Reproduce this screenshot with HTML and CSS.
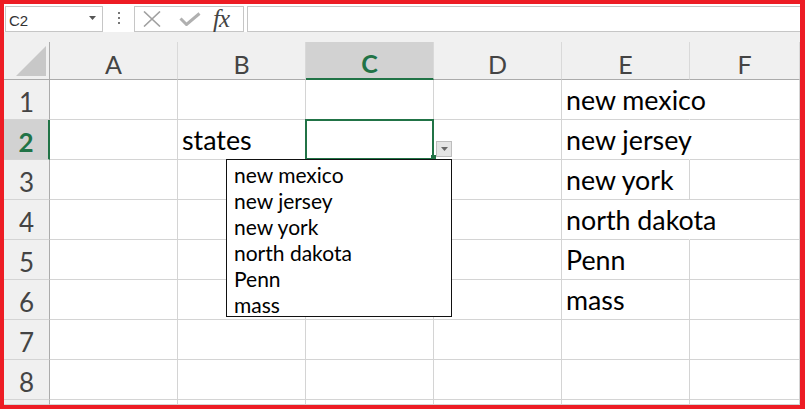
FILE: index.html
```html
<!DOCTYPE html>
<html lang="en">
<head>
  <meta charset="UTF-8">
  <meta name="viewport" content="width=device-width, initial-scale=1.0">
  <title>States list</title>
  <link rel="stylesheet" href="styles.css">
</head>
<body>
  <div class="window">
    <div class="formula-bar">
      <div class="name-box">
        <span>C2</span>
        <svg class="name-arrow" width="7" height="4" viewBox="0 0 7 4"><path d="M0 0h7L3.5 4z"/></svg>
      </div>
      <div class="grip"><span></span><span></span><span></span></div>
      <div class="fx-buttons">
        <svg class="icon-cancel" width="18" height="16" viewBox="0 0 18 16"><path d="M1 0.5L17 15.5M17 0.5L1 15.5"/></svg>
        <svg class="icon-enter" width="22" height="14" viewBox="0 0 22 14"><path d="M1.5 6.5L7.5 12.5L20.5 1.5"/></svg>
        <span class="fx">fx</span>
      </div>
      <div class="formula-input"></div>
    </div>

    <div class="sheet">
      <div class="grid">
        <div class="corner"></div>
        <div class="col-head">A</div>
        <div class="col-head">B</div>
        <div class="col-head active">C</div>
        <div class="col-head">D</div>
        <div class="col-head">E</div>
        <div class="col-head">F</div>

        <div class="row-head">1</div>
        <div class="cell"></div><div class="cell"></div><div class="cell"></div><div class="cell"></div>
        <div class="cell spill">new mexico</div><div class="cell"></div>

        <div class="row-head active">2</div>
        <div class="cell"></div>
        <div class="cell">states</div>
        <div class="cell selected">
          <div class="dv-button"><svg width="7" height="4" viewBox="0 0 7 4"><path d="M0 0h7L3.5 4z"/></svg></div>
          <ul class="dv-list">
            <li>new mexico</li>
            <li>new jersey</li>
            <li>new york</li>
            <li>north dakota</li>
            <li>Penn</li>
            <li>mass</li>
          </ul>
        </div>
        <div class="cell"></div>
        <div class="cell spill">new jersey</div><div class="cell"></div>

        <div class="row-head">3</div>
        <div class="cell"></div><div class="cell"></div><div class="cell"></div><div class="cell"></div>
        <div class="cell">new york</div><div class="cell"></div>

        <div class="row-head">4</div>
        <div class="cell"></div><div class="cell"></div><div class="cell"></div><div class="cell"></div>
        <div class="cell spill">north dakota</div><div class="cell"></div>

        <div class="row-head">5</div>
        <div class="cell"></div><div class="cell"></div><div class="cell"></div><div class="cell"></div>
        <div class="cell">Penn</div><div class="cell"></div>

        <div class="row-head">6</div>
        <div class="cell"></div><div class="cell"></div><div class="cell"></div><div class="cell"></div>
        <div class="cell">mass</div><div class="cell"></div>

        <div class="row-head">7</div>
        <div class="cell"></div><div class="cell"></div><div class="cell"></div><div class="cell"></div>
        <div class="cell"></div><div class="cell"></div>

        <div class="row-head">8</div>
        <div class="cell"></div><div class="cell"></div><div class="cell"></div><div class="cell"></div>
        <div class="cell"></div><div class="cell"></div>

        <div class="row-head"></div>
        <div class="cell"></div><div class="cell"></div><div class="cell"></div><div class="cell"></div>
        <div class="cell"></div><div class="cell"></div>
      </div>
    </div>
  </div>
</body>
</html>
```

FILE: styles.css
```css
body {
  margin: 0;
  background: #ed1c24;
  font-family: "Lato", "Liberation Sans", sans-serif;
}
.window {
  margin: 4px 5px 4px 4px;
  height: 401px;
  overflow: hidden;
  background: #f0f0f0;
}

/* formula bar */
.formula-bar {
  display: flex;
  height: 28px;
  box-sizing: border-box;
  padding-top: 2px;
  background: #fff;
}
.name-box {
  margin-left: 1px;
  width: 98px;
  box-sizing: border-box;
  border: 1px solid #c6c6c6;
  display: flex;
  align-items: center;
  justify-content: space-between;
  padding: 3px 6px 0 3px;
  font: 15px "Liberation Sans", sans-serif;
  color: #333;
}
.name-arrow {
  fill: #555;
  margin-top: -5px;
}
.grip {
  width: 31px;
  display: flex;
  flex-direction: column;
  align-items: center;
  justify-content: center;
  gap: 3px;
  padding-bottom: 2px;
}
.grip span {
  width: 2px;
  height: 2px;
  background: #777;
}
.fx-buttons {
  width: 110px;
  box-sizing: border-box;
  border: 1px solid #c6c6c6;
  display: flex;
  align-items: center;
  padding-left: 8px;
}
.fx-buttons svg {
  fill: none;
  stroke: #a0a0a0;
}
.icon-cancel {
  stroke-width: 1.6;
}
.icon-enter {
  margin-left: 18px;
  stroke-width: 3;
  stroke: #b0b0b0 !important;
}
.fx {
  margin-left: 12px;
  font: italic 25px "Liberation Serif", serif;
  color: #444;
  letter-spacing: -1px;
  line-height: 22px;
}
.formula-input {
  flex: 1;
  margin-left: 3px;
  border: 1px solid #c6c6c6;
  border-right: none;
  background: #fff;
}

/* sheet */
.sheet {
  padding-top: 10px;
}
.grid {
  display: grid;
  grid-template-columns: 46px repeat(5, 128px) 1fr;
  grid-template-rows: 38px repeat(8, 40px) 5px;
  background: #fff;
}
.grid > div {
  box-sizing: border-box;
  min-width: 0;
}
.corner {
  background: #f0f0f0;
  border-right: 1px solid #ababab;
  border-bottom: 1px solid #ababab;
  display: flex;
  justify-content: flex-end;
  align-items: flex-end;
  padding: 0 3px 3px 0;
}
.corner::after {
  content: "";
  width: 0;
  height: 0;
  border-left: 30px solid transparent;
  border-bottom: 30px solid #c8c8c8;
}
.col-head,
.row-head {
  background: #f0f0f0;
  color: #444;
  display: flex;
  justify-content: center;
  align-items: center;
  font-size: 25px;
}
.col-head {
  border-right: 1px solid #d9d9d9;
  border-bottom: 1px solid #ababab;
  padding-top: 6px;
}
.col-head.active {
  background: #d2d2d2;
  color: #217346;
  font-weight: bold;
  border-bottom: 2px solid #217346;
}
.row-head {
  border-right: 1px solid #ababab;
  border-bottom: 1px solid #d4d4d4;
  padding-top: 4px;
  font-size: 26px;
}
.row-head.active {
  background: #d2d2d2;
  color: #217346;
  font-weight: bold;
  border-right: 2px solid #217346;
}
.cell {
  position: relative;
  border-right: 1px solid #d4d4d4;
  border-bottom: 1px solid #d4d4d4;
  display: flex;
  align-items: flex-end;
  padding: 0 0 3px 4px;
  font-size: 26.8px;
  line-height: 32px;
  white-space: nowrap;
  color: #000;
}
.cell.spill {
  border-right-color: #fff;
}
.cell.selected::before {
  content: "";
  position: absolute;
  left: -1px;
  top: -1px;
  width: 129px;
  height: 41px;
  box-sizing: border-box;
  border: 2px solid #217346;
}
.cell.selected::after {
  content: "";
  position: absolute;
  left: 125px;
  top: 35px;
  width: 5px;
  height: 5px;
  background: #217346;
}

/* data validation dropdown */
.dv-button {
  position: absolute;
  left: 130px;
  top: 21px;
  width: 16px;
  height: 16px;
  box-sizing: border-box;
  border: 1px solid #bdbdbd;
  background: #e4e4e4;
  display: flex;
  align-items: center;
  justify-content: center;
  z-index: 2;
}
.dv-button svg {
  fill: #666;
}
.dv-list {
  position: absolute;
  left: -80px;
  top: 39px;
  width: 226px;
  height: 158px;
  box-sizing: border-box;
  margin: 0;
  padding: 2px 0 0 7px;
  list-style: none;
  border: 1px solid #111;
  background: #fff;
  overflow: hidden;
  z-index: 3;
  font-size: 21px;
  line-height: 26px;
}
```
